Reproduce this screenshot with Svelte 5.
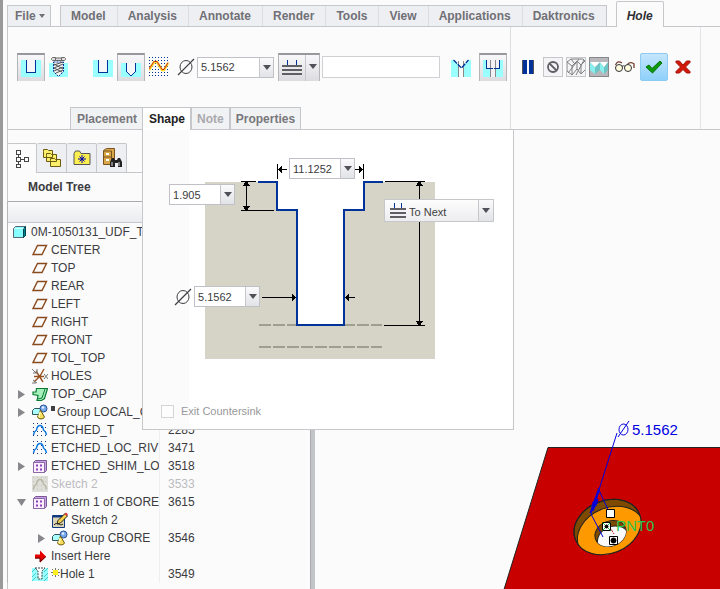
<script lang="ts">
  type TreeRow = {
    name: string;
    icon: string;
    depth: number;
    id?: string;
    expand?: 'open' | 'closed';
    mark?: 'square' | 'star';
    suppressed?: boolean;
  };

  const menus = ['Model', 'Analysis', 'Annotate', 'Render', 'Tools', 'View', 'Applications', 'Daktronics'];

  const rows: TreeRow[] = [
    { name: '0M-1050131_UDF_T', icon: 'part', depth: 0 },
    { name: 'CENTER', icon: 'plane', depth: 1 },
    { name: 'TOP', icon: 'plane', depth: 1 },
    { name: 'REAR', icon: 'plane', depth: 1 },
    { name: 'LEFT', icon: 'plane', depth: 1 },
    { name: 'RIGHT', icon: 'plane', depth: 1 },
    { name: 'FRONT', icon: 'plane', depth: 1 },
    { name: 'TOL_TOP', icon: 'plane', depth: 1 },
    { name: 'HOLES', icon: 'csys', depth: 1 },
    { name: 'TOP_CAP', icon: 'extrude', depth: 1, expand: 'closed' },
    { name: 'Group LOCAL_G', icon: 'group', depth: 1, expand: 'closed', mark: 'square' },
    { name: 'ETCHED_T', icon: 'cosmetic', depth: 1, id: '2285' },
    { name: 'ETCHED_LOC_RIV', icon: 'cosmetic', depth: 1, id: '3471' },
    { name: 'ETCHED_SHIM_LO', icon: 'pattern', depth: 1, id: '3518', expand: 'closed' },
    { name: 'Sketch 2', icon: 'cosmeticOff', depth: 1, id: '3533', suppressed: true },
    { name: 'Pattern 1 of CBORE', icon: 'pattern', depth: 1, id: '3615', expand: 'open' },
    { name: 'Sketch 2', icon: 'sketch', depth: 2 },
    { name: 'Group CBORE', icon: 'group', depth: 2, id: '3546', expand: 'closed' },
    { name: 'Insert Here', icon: 'insert', depth: 1 },
    { name: 'Hole 1', icon: 'hole', depth: 1, id: '3549', mark: 'star' }
  ];

  let diameter = $state('5.1562');
  let boreDiameter = $state('11.1252');
  let boreDepth = $state('1.905');
</script>

{#snippet caret()}
  <svg class="caret" width="8" height="5" viewBox="0 0 8 5" aria-hidden="true"><path d="M0 0h8L4 5z" fill="#505058" /></svg>
{/snippet}

{#snippet diameterSign()}
  <svg width="18" height="18" viewBox="0 0 18 18" fill="none" stroke="#404044" aria-hidden="true">
    <ellipse cx="9" cy="9" rx="6" ry="6.5" />
    <path d="M1 17L17 1" stroke-width="1.2" />
  </svg>
{/snippet}

{#snippet depthIcon(width: number)}
  <svg {width} height="16" viewBox="0 0 {width} 16" shape-rendering="crispEdges" aria-hidden="true">
    <path d="M{width / 4 + 0.5} 0v5M{(width * 3) / 4 - 0.5} 0v5" stroke="#039" />
    <path d="M0 6h{width}M0 10h{width}M0 14h{width}" stroke="#606064" stroke-width="2" />
  </svg>
{/snippet}

{#snippet uHole()}
  <svg width="20" height="20" viewBox="0 0 20 20" shape-rendering="crispEdges" aria-hidden="true">
    <path d="M0 3h20v17H0z" fill="#9ff" />
    <path d="M5 3h10v12H5z" fill="#f6f6f8" />
    <path d="M5.500 3v12.500h9V3" fill="none" stroke="#039" />
  </svg>
{/snippet}

{#snippet treeIcon(kind: string)}
  <svg class="node-icon" width="16" height="16" viewBox="0 0 16 16" aria-hidden="true">
    {#if kind === 'part'}
      <path d="M1.500 4.500l2-2h10v9l-2 2h-10z" fill="#8ff" stroke="#567" />
      <path d="M11.500 4.500l2-2v9l-2 2z" fill="#088" stroke="#045" />
      <path d="M2 4.500h9.500" stroke="#cff" />
    {:else if kind === 'plane'}
      <path d="M5.500 3.500h9L10 12.500H1z" fill="none" stroke="#8b4a1c" stroke-width="1.400" />
    {:else if kind === 'csys'}
      <path d="M2 8.500h10M4 3l7 11M12 1L8 8l-6 6" stroke="#9a5222" stroke-width="1.400" fill="none" />
      <path d="M0 1l4 4M5 1v4H1M12 6l4 5M16 6l-4 5M1 12l4 3M0 15h4" stroke="#777" fill="none" />
    {:else if kind === 'extrude'}
      <path d="M4.500 2.500h11l-3 10-3 2H5l1-5-5-1V6h3z" fill="#a6f0bc" stroke="#0a7a33" stroke-width="1.200" />
      <path d="M13 3l-3 9-4 1" fill="none" stroke="#0a7a33" />
    {:else if kind === 'group'}
      <path d="M.5 6.500l2-2h6v5l-1 1h-7z" fill="#aff" stroke="#355" />
      <circle cx="11.500" cy="4.500" r="3.500" fill="#79a8ea" stroke="#2a4f93" />
      <circle cx="11" cy="3.500" r="1.200" fill="#e6f1ff" />
      <path d="M8.500 6l4 7c-1 2.500-6 2.500-7 0z" fill="#f4de58" stroke="#6b5a10" />
      <path d="M8 8l-1 5" stroke="#fff9c0" stroke-width="1.500" />
    {:else if kind === 'cosmetic' || kind === 'cosmeticOff'}
      {#if kind === 'cosmeticOff'}
        <path d="M0 0h16v16H0z" fill="#deded9" />
      {/if}
      <path
        d="M1 1.500h15M1 5.500h15M1 9.500h15M1 13.500h15"
        stroke={kind === 'cosmetic' ? '#237' : '#c4c4bb'}
        stroke-dasharray="1 3"
        shape-rendering="crispEdges"
      />
      <path
        d="M1.500 13C2 10 3 9 4.500 8 5 4.500 6.500 3.500 8 3.500S11 4.500 11.500 8C13 9 14 10 14.500 13"
        fill="none"
        stroke={kind === 'cosmetic' ? '#0a78e0' : '#b9b8a2'}
        stroke-width="1.500"
      />
    {:else if kind === 'pattern'}
      <path d="M1.500 4.500l2-2h11v10l-2 2h-11z" fill="#c9a0e4" stroke="#7a5a96" />
      <path d="M1.500 4.500h11v10h-11z" fill="#fbefff" stroke="#8a6aa6" />
      <path d="M4 6.500h2v2H4zM8 6.500h2v2H8zM4 10.500h2v2H4zM8 10.500h2v2H8z" fill="#8d3fb8" />
    {:else if kind === 'sketch'}
      <path d="M.5 3.500h12v12H.5z" fill="#dcd5b4" stroke="#123a80" />
      <path d="M1 4.500h11" stroke="#123a80" stroke-width="2" />
      <path d="M2 13c3-4 6 2 9-1" stroke="#222" fill="none" />
      <path d="M5 12l1-3.500 7-7 2.500 2.500-7 7z" fill="#f5d24a" stroke="#222" />
      <path d="M12.500 2l1.500-1.500L16 2.500 14.500 4z" fill="#d33" />
    {:else if kind === 'insert'}
      <path d="M3 6.500h5v-4l6 6-6 6v-4H3z" fill="#e80000" />
      <path d="M3 10h5v4l6-5.500" fill="none" stroke="#600" />
    {:else}
      <path d="M0 2h16v13H0z" fill="#9ff" />
      <path d="M0 6l4-4M0 11l4-4M0 15l4-4M12 6l4-4M12 11l4-4M12 15l4-4" stroke="#4cc" />
      <path d="M3 2h10l-3 3v8H6V5z" fill="#fff" stroke="#344" stroke-dasharray="2 1" />
    {/if}
  </svg>
{/snippet}

<div class="app">
  <nav class="menubar" aria-label="Ribbon">
    <button class="file-menu">File<svg width="6" height="4" viewBox="0 0 6 4" aria-hidden="true"><path d="M0 0h6L3 4z" fill="#707074" /></svg></button>
    <div class="menus">
      {#each menus as menu}
        <button>{menu}</button>
      {/each}
    </div>
    <button class="active-menu">Hole</button>
  </nav>

  <section class="ribbon" aria-label="Hole dashboard">
    <div class="dashboard">
      <div class="tools">
        <div class="tool-group">
          <button class="tool pressed" aria-label="Simple hole">{@render uHole()}</button>
          <button class="tool" aria-label="Standard hole">
            <svg width="20" height="20" viewBox="0 0 20 20" aria-hidden="true">
              <path d="M0 6h19v14H0z" fill="#9ff" />
              <path d="M4.500 5h10v9.500l-5 5-5-5z" fill="#f2f2f2" stroke="#039" stroke-dasharray="2 1" />
              <path d="M5 8l9-3M5 11l9-4M5 14l9-4M7 16l7-3M5 7l9 5M5 11l8 4" stroke="#555" />
              <path d="M2.500 1.500l1-1h3v3h-3l-1-1zM6.500 1h6v2.500h-6zM12.500.5h3l1 1v1l-1 1h-3z" fill="#ddd" stroke="#666" />
            </svg>
          </button>
        </div>
        <div class="tool-group">
          <button class="tool" aria-label="Rectangle profile">{@render uHole()}</button>
          <button class="tool pressed" aria-label="Drill profile">
            <svg width="20" height="20" viewBox="0 0 20 20" shape-rendering="crispEdges" aria-hidden="true">
              <path d="M0 6h20v14H0z" fill="#9ff" />
              <path d="M5 6h10v9l-5 4-5-4z" fill="#f6f6f8" />
              <path d="M5.500 6v8.500l4 4h1l4-4V6" fill="none" stroke="#039" />
            </svg>
          </button>
          <button class="tool" aria-label="Sketched profile">
            <svg width="20" height="20" viewBox="0 0 20 20" aria-hidden="true">
              {#each [0, 3, 6, 9, 12, 15, 18] as y}
                <path d="M0 {y + 0.5}h20" stroke="#039" stroke-dasharray="1 2" shape-rendering="crispEdges" />
              {/each}
              <path d="M0 13L5 5h3l5 8h2l4-7" fill="none" stroke="#fd2" stroke-width="2.500" />
              <path d="M0 12L5 4.500h3l5 8h2l4-7" fill="none" stroke="#c22" />
            </svg>
          </button>
        </div>
        <div class="sized">
          {@render diameterSign()}
          <div class="combo wide">
            <input aria-label="Hole diameter" bind:value={diameter} />
            <button aria-label="Recent diameters">{@render caret()}</button>
          </div>
        </div>
        <div class="split">
          <button class="split-main" aria-label="Drill to next surface">{@render depthIcon(20)}</button>
          <button class="split-arrow" aria-label="Depth options">{@render caret()}</button>
        </div>
        <input class="collector" aria-label="Depth reference" />
        <div class="tool-group bores">
          <button class="tool" aria-label="Add countersink">
            <svg width="20" height="20" viewBox="0 0 20 20" aria-hidden="true">
              <path d="M0 3h20v17H0z" fill="#9ff" />
              <path d="M3 3h14l-4 5v12H7V8z" fill="#fbfbfc" />
              <path d="M7.500 4v16M12.500 4v16" stroke="#888" />
              <path d="M2.500 3l8 8 7-8" fill="none" stroke="#039" stroke-width="1.300" stroke-dasharray="5 1" />
            </svg>
          </button>
          <button class="tool pressed" aria-label="Add counterbore">
            <svg width="20" height="20" viewBox="0 0 20 20" shape-rendering="crispEdges" aria-hidden="true">
              <path d="M0 3h20v17H0z" fill="#9ff" />
              <path d="M3 3h14v8h-4v9H7v-9H3z" fill="#f2f2f4" />
              <path d="M7.500 3v17M12.500 3v17" stroke="#888" />
              <path d="M3.500 3v8.500h4m5 0h4V3" fill="none" stroke="#039" />
              <path d="M8 11.500h5" stroke="#039" stroke-dasharray="2 1" />
            </svg>
          </button>
        </div>
      </div>

      <div class="panel-tabs">
        <button class="tab">Placement</button>
        <div class="shape-tab">
          <button class="tab open" aria-expanded="true">Shape</button>
          <div class="shape-panel">
            <div class="figure">
              <svg class="profile" width="370" height="262" viewBox="0 0 370 262" shape-rendering="crispEdges" aria-hidden="true">
                <path d="M62 52h230v177H62z" fill="#d6d4c7" />
                <path d="M116 195h123M116 217h123" stroke="#9f9f90" stroke-width="2" stroke-dasharray="12 2" />
                <path d="M134 51v29h20v115h47V80h20V51z" fill="#fff" />
                <path d="M115 52h19v28h20v115h47V80h20V52h19" fill="none" stroke="#039" stroke-width="2" />
                <g fill="none" stroke="#000">
                  <path d="M98 51.500h15M98 80.500h33M103.500 52v28" />
                  <path d="M134.500 34v15M220.500 34v15M135 39.500h9M211 39.500h9" />
                  <path d="M119 167.500h33M203 167.500h9" />
                  <path d="M242 51.500h40M241 195.500h41M276.500 52v143" />
                </g>
                <path
                  d="M103.500 51l4 5h-8zM103.500 81l4-5h-8zM135 39.500l4-4v8zM220 39.500l-4-4v8zM153 167.500l-4-4v8zM202 167.500l4-4v8zM276.500 51l4 5h-8zM276.500 196l4-5h-8z"
                />
              </svg>
              <div class="combo bore-diameter">
                <input aria-label="Counterbore diameter" bind:value={boreDiameter} />
                <button aria-label="Recent counterbore diameters">{@render caret()}</button>
              </div>
              <div class="combo bore-depth">
                <input aria-label="Counterbore depth" bind:value={boreDepth} />
                <button aria-label="Recent counterbore depths">{@render caret()}</button>
              </div>
              <div class="sized hole-diameter">
                {@render diameterSign()}
                <div class="combo">
                  <input aria-label="Drill diameter" bind:value={diameter} />
                  <button aria-label="Recent drill diameters">{@render caret()}</button>
                </div>
              </div>
              <div class="depth-select">
                {@render depthIcon(16)}
                <select aria-label="Depth">
                  <option>To Next</option>
                  <option>Blind</option>
                  <option>Through All</option>
                </select>
                <span class="select-arrow">{@render caret()}</span>
              </div>
            </div>
            <label class="exit"><input type="checkbox" disabled />Exit Countersink</label>
          </div>
        </div>
        <button class="tab" disabled>Note</button>
        <button class="tab">Properties</button>
      </div>
    </div>

    <div class="controls">
      <button class="tool" aria-label="Pause">
        <svg width="14" height="14" viewBox="0 0 14 14" shape-rendering="crispEdges" aria-hidden="true"><path d="M1 0h5v14H1zM8 0h5v14H8z" fill="#039" /><path d="M1.500 0v14M12.500 0v14" stroke="#555" /></svg>
      </button>
      <button class="mini framed" aria-label="No preview">
        <svg width="14" height="14" viewBox="0 0 14 14" fill="none" stroke="#606064" stroke-width="1.800" aria-hidden="true"><circle cx="7" cy="7" r="5" /><path d="M3.500 3.500l7 7" /></svg>
      </button>
      <button class="mini framed" aria-label="Unattached preview">
        <svg width="18" height="18" viewBox="0 0 18 18" fill="none" stroke="#808080" aria-hidden="true">
          <path d="M0 4l4-3h12l2 2M0 4l5 4 5-5 4 4 4-4M0 5v8l5 4 5-6 4 5 4-4M5 8v9M10 3v8M14 7v9M1 15L12 1M4 1l3 4M9 17l8-15" />
        </svg>
      </button>
      <button class="mini framed down" aria-label="Attached preview">
        <svg width="18" height="18" viewBox="0 0 18 18" aria-hidden="true">
          <path d="M0 4l5 5v7l-5-4zM10 4l4 5v7l-4-4z" fill="#8ee" />
          <path d="M5 9l5-5v8l-5 4zM14 9l4-5v8l-4 4z" fill="#6fc4c6" />
          <path d="M0 4h10L5 9zM10 4h8l-4 5z" fill="#fff" />
        </svg>
      </button>
      <button class="tool glasses" aria-label="Verify">
        <svg width="22" height="14" viewBox="0 0 22 14" fill="none" stroke="#333" aria-hidden="true">
          <path d="M1.500 5C3 1.500 5 1 8 3M13 5c2-3 5-3 7-1v4" stroke="#733c2c" stroke-width="1.300" />
          <circle cx="5" cy="8" r="3.500" fill="#fffde0" /><circle cx="14" cy="8" r="3.500" fill="#fffde0" />
          <path d="M8 6.500c1-1 2-1 3 0" />
        </svg>
      </button>
      <button class="tool accept" aria-label="OK">
        <svg width="18" height="14" viewBox="0 0 18 14" aria-hidden="true"><path d="M1 7l3-2 3 3.500L15 1l2 2L7.500 13z" fill="#0a9a0a" stroke="#067006" /></svg>
      </button>
      <button class="tool" aria-label="Cancel">
        <svg width="16" height="16" viewBox="0 0 16 16" aria-hidden="true"><path d="M1 2h3.500L8 6l3.500-4H15v1.500L10.500 8l4.500 4.500V14h-3.500L8 10.500 4.500 14H1v-1.500L5.500 8 1 3.500z" fill="#d21a0a" stroke="#a31208" /></svg>
      </button>
    </div>
  </section>

  <main class="workspace">
    <aside class="sidebar">
      <div class="side-tabs">
        <button class="current" aria-label="Model tree">
          <svg width="16" height="20" viewBox="0 0 16 20" fill="none" stroke="#444" shape-rendering="crispEdges" aria-hidden="true"><path d="M2.500 1.500h4v4h-4zM2.500 8.500h4v4h-4zM2.500 15.500h4v3h-4zM10.500 8.500h4v4h-4zM4.500 6v2M4.500 13v2M7 10.500h3" /></svg>
        </button>
        <button aria-label="Layers">
          <svg width="20" height="20" viewBox="0 0 20 20" fill="#fbf06a" stroke="#6b5a10" aria-hidden="true">
            <path d="M1.500 3.500v-2h4l1 1h4v7h-9zM4.500 7.500v-2h4l1 1h5v7h-10zM8.500 12.500v-2h4l1 1h5v7h-10z" />
          </svg>
        </button>
        <button aria-label="Favorites">
          <svg width="18" height="16" viewBox="0 0 18 16" aria-hidden="true">
            <path d="M1 3.500L2.500 1h4L8 3.500h9v11H1z" fill="#fbee50" stroke="#555" />
            <path d="M9 5v8M5 9h8M6.500 6.500l5 5M11.500 6.500l-5 5" stroke="#00a" />
          </svg>
        </button>
        <button aria-label="Find">
          <svg width="20" height="22" viewBox="0 0 20 22" aria-hidden="true">
            <path d="M1.500 3.500l3-2h8v13l-3 3h-8z" fill="#d8a848" stroke="#7a5220" />
            <path d="M2 4h7.500v13M2 10h7.500" fill="none" stroke="#7a5220" />
            <path d="M4 7h3M4 13h3" stroke="#fff" stroke-width="2" />
            <path d="M8 20v-5l2-4h2l1 2h2l1-2h2l2 4v5h-4v-4h-3v4z" fill="#222" />
            <path d="M10 15v4M17 15v4" stroke="#ddd" />
          </svg>
        </button>
      </div>
      <h2>Model Tree</h2>
      <table>
        <thead>
          <tr><th class="name-col" scope="col" aria-label="Feature"></th><th scope="col" aria-label="Feature ID"></th></tr>
        </thead>
        <tbody>
          {#each rows as row}
            <tr class:suppressed={row.suppressed}>
              <td>
                <div class="node depth-{row.depth}">
                  {#if row.depth > 0}
                    <span class="twisty">
                      {#if row.expand}
                        <button aria-label="Toggle {row.name}">
                          <svg width="9" height="9" viewBox="0 0 9 9" fill="#88888c" aria-hidden="true">
                            <path d={row.expand === 'open' ? 'M0 1h9L4.500 8z' : 'M1 0l7 4.500L1 9z'} />
                          </svg>
                        </button>
                      {/if}
                    </span>
                  {/if}
                  {@render treeIcon(row.icon)}
                  {#if row.mark === 'square'}
                    <span class="mark-square"></span>
                  {:else if row.mark === 'star'}
                    <svg class="mark-star" width="9" height="9" viewBox="0 0 9 9" aria-hidden="true"><path d="M4.500 0v9M0 4.500h9M1 1l7 7M8 1L1 8" stroke="#776" /><path d="M2 2h5v5H2z" fill="#fe2" /></svg>
                  {/if}
                  <span>{row.name}</span>
                </div>
              </td>
              <td class="id">{row.id ?? ''}</td>
            </tr>
          {/each}
        </tbody>
      </table>
    </aside>

    <div class="viewport">
      <svg viewBox="0 0 405 459" preserveAspectRatio="xMinYMin slice" role="img" aria-label="Hole preview in the model">
        <defs>
          <clipPath id="bore"><ellipse cx="292.500" cy="397" rx="34.500" ry="26.500" transform="rotate(-22 292.500 397)" /></clipPath>
          <clipPath id="drill"><ellipse cx="295.500" cy="403.500" rx="16" ry="12.500" transform="rotate(-22 295.500 403.500)" /></clipPath>
        </defs>
        <path d="M189 459.500L233 317.500H406V460z" fill="#c80000" stroke="#222" />
        <g stroke="#222">
          <ellipse cx="292.500" cy="397" rx="34.500" ry="26.500" transform="rotate(-22 292.500 397)" fill="#7d4a00" />
          <g clip-path="url(#bore)">
            <ellipse cx="296" cy="404" rx="34.500" ry="26.500" transform="rotate(-22 296 404)" fill="#ff9900" />
          </g>
          <ellipse cx="292.500" cy="397" rx="34.500" ry="26.500" transform="rotate(-22 292.500 397)" fill="none" />
          <ellipse cx="295.500" cy="403.500" rx="16" ry="12.500" transform="rotate(-22 295.500 403.500)" fill="#7d4a00" />
          <g clip-path="url(#drill)">
            <ellipse cx="298" cy="409" rx="16" ry="12.500" transform="rotate(-22 298 409)" fill="#fbfbfc" />
          </g>
        </g>
        <g fill="none" stroke="#0000e0">
          <path d="M302 303L282 366l-6 18M283 358l12 26M276 384l12 23" />
          <path d="M283 360l-8 23 8-14-5 12 6-20-7 15 6-3M277 373l6-2M276 378l6-3" />
          <ellipse cx="308.500" cy="299.500" rx="4.500" ry="5.500" />
          <path d="M303 307l11-16" />
        </g>
        <path d="M294 396l5 8" stroke="#b22" stroke-dasharray="3 1" />
        <g stroke="#000" fill="#fff">
          <path d="M291.500 379.500h8v8h-8zM287.500 392.500h8v8h-8zM294.500 406.500h8v8h-8z" />
          <circle cx="298.500" cy="410.500" r="2.500" fill="#000" />
          <path d="M287.500 392.500l8 8M295.500 392.500l-8 8" stroke="#2b4" />
          <circle cx="291.500" cy="396.500" r="1.500" fill="#000" />
        </g>
        <text class="dim" x="317" y="305">5.1562</text>
        <text class="point" x="301" y="401">PNT0</text>
      </svg>
    </div>
  </main>
</div>

<style>
  :global(body) {
    margin: 0;
  }

  .app {
    display: flex;
    flex-direction: column;
    box-sizing: border-box;
    min-height: 100vh;
    padding-left: 4px;
    border-left: 3px solid #999;
    background: #fbfbfc;
    color: #3c3c40;
    font-family: "Liberation Sans", Arial, sans-serif;
    font-size: 12px;
    overflow: hidden;
  }

  button,
  input,
  select {
    box-sizing: border-box;
    margin: 0;
    padding: 0;
    border: 0;
    border-radius: 0;
    background: none;
    color: inherit;
    font: inherit;
  }

  svg {
    display: block;
    flex: none;
  }

  /* menu bar */
  .menubar {
    display: flex;
    align-items: flex-end;
    gap: 9px;
    height: 26px;
    border-bottom: 1px solid #c5c7cb;
  }

  .menubar button {
    height: 21px;
    color: #707076;
    font-weight: bold;
  }

  .menubar .file-menu {
    display: flex;
    align-items: center;
    gap: 3px;
    width: 44px;
    padding-left: 7px;
    border: 1px solid #c5c7cb;
    border-bottom: 0;
    background: #eeeff2;
  }

  .menus {
    display: flex;
    border: 1px solid #c5c7cb;
    border-bottom: 0;
    background: #eeeff2;
  }

  .menus button {
    height: 20px;
    padding: 0 11px 0 10px;
    border-right: 1px solid #dcdde1;
  }

  .menus button:last-child {
    border-right: 0;
  }

  .menubar .active-menu {
    height: 26px;
    margin-bottom: -1px;
    padding: 2px 10px 0;
    border: 1px solid #c5c7cb;
    border-bottom: 0;
    border-radius: 2px 2px 0 0;
    background: #fbfbfc;
    color: #303034;
    font-style: italic;
  }

  /* ribbon */
  .ribbon {
    display: flex;
    border-left: 1px solid #c5c7cb;
    border-bottom: 1px solid #c5c7cb;
  }

  .dashboard {
    display: flex;
    flex-direction: column;
    gap: 26px;
    padding-top: 26px;
    border-right: 1px solid #dcdde1;
  }

  .tools {
    display: flex;
    align-items: center;
    padding: 0 3px 0 9px;
  }

  .tool-group {
    display: flex;
    margin-right: 16px;
  }

  .tool-group + .tool-group {
    margin-right: 4px;
  }

  .tool-group.bores {
    gap: 4px;
    margin: 0 0 0 7px;
  }

  .tool,
  .mini {
    display: flex;
    align-items: center;
    justify-content: center;
    width: 28px;
    height: 28px;
  }

  .tool.pressed,
  .split {
    border: 1px solid #b4b5b9;
    border-top: 2px solid #98989c;
    border-bottom: 0;
    background: linear-gradient(#f8f8fa, #dcdce0);
  }

  .tool.pressed svg {
    margin-top: -2px;
  }

  .sized {
    display: flex;
    align-items: center;
    gap: 2px;
  }

  .combo {
    display: flex;
    box-sizing: border-box;
    width: 66px;
    height: 21px;
    border: 1px solid #c0c1c6;
    background: #fff;
    font-size: 11px;
  }

  .combo.wide {
    width: 77px;
  }

  .combo input {
    flex: 1;
    min-width: 0;
    padding-left: 3px;
  }

  .combo button,
  .split-arrow,
  .select-arrow {
    display: flex;
    align-items: center;
    justify-content: center;
    flex: none;
    width: 14px;
    border-left: 1px solid #c5c7cb;
    background: linear-gradient(#fafafb, #e2e3e7);
  }

  .split {
    display: flex;
    box-sizing: border-box;
    width: 42px;
    height: 28px;
    margin: 0 2px 0 4px;
  }

  .split-main {
    display: flex;
    align-items: center;
    justify-content: center;
    flex: 1;
  }

  .split-arrow {
    padding-bottom: 4px;
    background: none;
  }

  .collector {
    width: 118px;
    height: 22px;
    border: 1px solid #d0d1d5;
    background: #fff;
  }

  .panel-tabs {
    display: flex;
    height: 22px;
    margin-left: 62px;
  }

  .tab {
    height: 22px;
    padding: 0 5px;
    border: 1px solid #c5c7cb;
    border-bottom: 0;
    background: #f1f2f4;
    color: #77777c;
    font-weight: bold;
  }

  .tab:first-child {
    padding-left: 6px;
  }

  .tab:disabled {
    color: #a9a9ad;
  }

  .shape-tab {
    position: relative;
    margin-left: -1px;
  }

  .tab.open {
    position: relative;
    z-index: 2;
    height: 23px;
    padding-left: 6px;
    background: #fff;
    color: #222;
  }

  .shape-panel {
    position: absolute;
    z-index: 1;
    top: 22px;
    left: 0;
    border: 1px solid #c5c7cb;
    background: linear-gradient(to right, #fbfbfc 46px, #fff 46px);
  }

  .figure {
    position: relative;
  }

  .bore-diameter,
  .bore-depth,
  .hole-diameter,
  .depth-select {
    position: absolute;
  }

  .bore-diameter {
    top: 28px;
    left: 146px;
  }

  .bore-depth {
    top: 54px;
    left: 26px;
  }

  .hole-diameter {
    top: 156px;
    left: 31px;
  }

  .depth-select {
    display: flex;
    align-items: center;
    gap: 3px;
    box-sizing: border-box;
    top: 69px;
    left: 241px;
    width: 110px;
    height: 23px;
    padding-left: 5px;
    border: 1px solid #c5c7cb;
    background: linear-gradient(#fdfdfd, #ededf0);
    font-size: 11px;
  }

  .depth-select select {
    appearance: none;
    flex: 1;
    min-width: 0;
    align-self: stretch;
    padding-top: 2px;
  }

  .select-arrow {
    align-self: stretch;
    pointer-events: none;
  }

  .exit {
    display: flex;
    align-items: center;
    gap: 7px;
    padding: 13px 18px 11px;
    color: #98989c;
    font-size: 11px;
    line-height: 13px;
  }

  .exit input {
    appearance: none;
    width: 13px;
    height: 13px;
    border: 1px solid #d4d5d8;
    background: #fdfdfd;
  }

  .controls {
    display: flex;
    align-items: flex-start;
    padding: 26px 3px 0;
    border-right: 1px solid #e4e5e8;
  }

  .mini {
    width: 20px;
    height: 20px;
    margin: 4px 2px 0 1px;
  }

  .mini.framed {
    border: 1px solid #c5c7cb;
    background: #f4f4f6;
  }

  .mini.down {
    border-color: #88888c;
    background: #b8b8bc;
  }

  .accept {
    margin: 0 1px;
    border: 1px solid #8ecbf2;
    border-radius: 2px;
    background: linear-gradient(#c4e6fc, #8ed0fa);
  }

  /* model tree */
  .workspace {
    display: flex;
    flex: 1;
  }

  .sidebar {
    flex: 0 0 304px;
    min-width: 0;
    padding-top: 13px;
    border-right: 4px solid #c3c4c8;
    box-shadow: inset 1px 0 #c5c7cb, inset -1px 0 #a9aaae;
  }

  .side-tabs {
    display: flex;
    height: 29px;
    border-bottom: 1px solid #c5c7cb;
  }

  .side-tabs button {
    display: flex;
    align-items: center;
    justify-content: center;
    width: 30px;
    border: 1px solid #c5c7cb;
    border-width: 1px 1px 0 0;
    border-radius: 2px 2px 0 0;
    background: #eeeff2;
  }

  .side-tabs .current {
    height: 30px;
    border-left-width: 1px;
    background: #fbfbfc;
  }

  h2 {
    margin: 0;
    padding-left: 21px;
    font-size: 12px;
    line-height: 28px;
  }

  table {
    width: 100%;
    table-layout: fixed;
    border-collapse: separate;
    border-spacing: 0;
    border-left: 1px solid #b4b5b9;
  }

  th {
    box-sizing: border-box;
    height: 22px;
    padding: 0;
    border-top: 1px solid #a9aaae;
    border-bottom: 1px solid #c5c7cb;
    background: linear-gradient(#fafafb, #ebecef);
  }

  .name-col {
    width: 151px;
  }

  td {
    height: 18px;
    padding: 0;
    overflow: hidden;
    line-height: 18px;
    white-space: nowrap;
  }

  td.id {
    padding-left: 8px;
    border-left: 1px solid #eeeff2;
  }

  .node {
    display: flex;
    align-items: center;
    height: 18px;
  }

  .depth-0 {
    padding-left: 4px;
  }

  .depth-1 {
    padding-left: 9px;
  }

  .depth-2 {
    padding-left: 29px;
  }

  .twisty {
    flex: none;
    width: 15px;
  }

  .twisty button {
    display: block;
  }

  .node-icon {
    margin-right: 3px;
  }

  .mark-square {
    flex: none;
    width: 4px;
    height: 5px;
    margin: 0 2px 7px 0;
    background: #404044;
  }

  .mark-star {
    margin-bottom: 4px;
  }

  .suppressed {
    color: #bcbcbf;
  }

  /* graphics area */
  .viewport {
    position: relative;
    flex: 1;
    min-width: 0;
  }

  .viewport svg {
    position: absolute;
    width: 100%;
    height: 100%;
  }

  .dim,
  .point {
    font-size: 15px;
  }

  .dim {
    fill: #0000e0;
  }

  .point {
    fill: #2bc44f;
  }
</style>
